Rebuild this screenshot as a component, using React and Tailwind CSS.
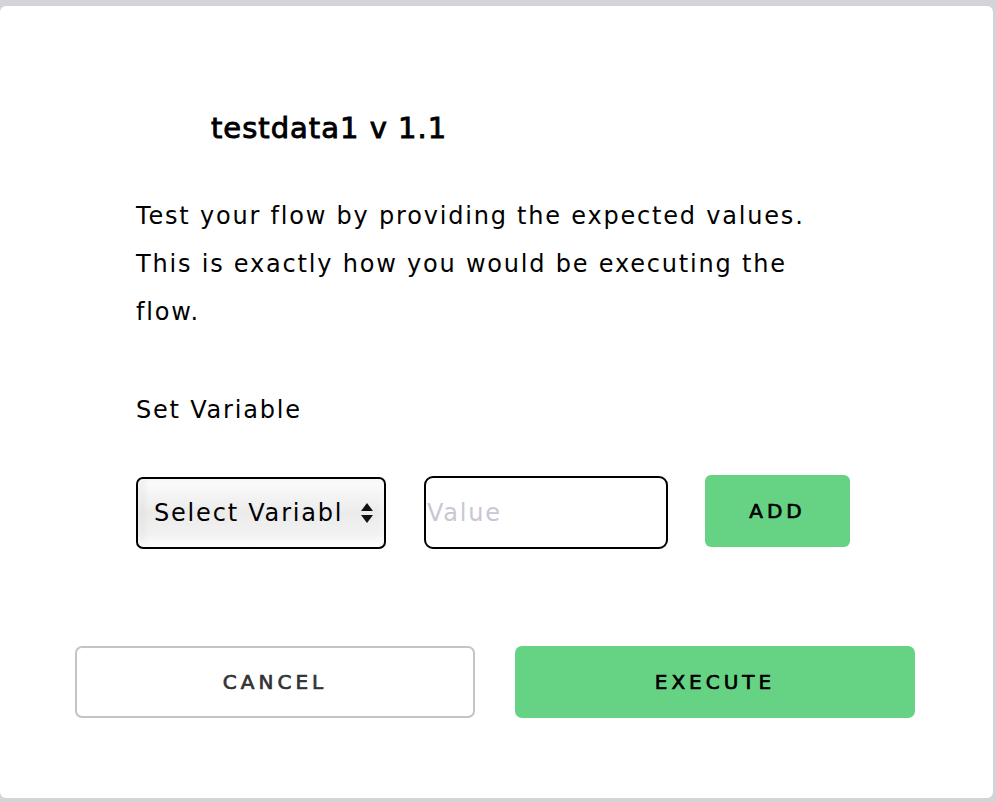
import React from 'react';

const font = { fontFamily: '"DejaVu Sans", "Open Sans", sans-serif' };

const App = () => {
  return (
    <div className="w-[996px] h-[802px] bg-[#d2d4d7] pt-[6px] overflow-hidden" style={font}>
      <div className="w-[993px] h-[792px] bg-white rounded-[6px] flex flex-col">
        <h1 className="ml-[211px] mt-[104px] text-[29px] leading-[36px] font-normal tracking-[1px] [-webkit-text-stroke:0.9px_black] text-black">
          testdata1 v 1.1
        </h1>

        {/* description */}
        <p className="ml-[136px] mt-[46px] text-[24px] leading-[48px] tracking-[1.8px] text-black">
          Test your flow by providing the expected values.<br />
          This is exactly how you would be executing the<br />
          flow.
        </p>

        <div className="ml-[136px] mt-[50px] text-[24px] leading-[48px] tracking-[1.8px] text-black">
          Set Variable
        </div>

        <div className="ml-[136px] mt-[41px] flex items-start">
          <div className="mt-[2px] w-[250px] h-[72px] border-2 border-black rounded-[7px] bg-gradient-to-b from-[#fdfdfd] via-[#ebebeb] to-[#f6f6f6] shadow-[inset_0_-6px_8px_rgba(255,255,255,0.8),inset_6px_0_6px_rgba(0,0,0,0.06)] flex items-center pl-[16px] pr-[10px]">
            <span className="text-[24px] tracking-[1.8px] text-black whitespace-nowrap overflow-hidden w-[188px]">Select Variable</span>
            <svg width="14" height="22" viewBox="0 0 14 22" className="ml-auto">
              <path d="M7 1 L13 9 L1 9 Z" fill="#111" />
              <path d="M1 13 L13 13 L7 21 Z" fill="#111" />
            </svg>
          </div>
          <div className="ml-[38px] mt-[1px] w-[244px] h-[73px] border-2 border-black rounded-[9px] flex items-center pl-[1px]">
            <span className="text-[24px] tracking-[1.8px] text-[#c9c7d5]">Value</span>
          </div>
          <button className="ml-[37px] w-[145px] h-[72px] bg-[#66d384] rounded-[6px] text-[20px] font-normal tracking-[4px] [-webkit-text-stroke:0.7px_black] text-black">
            ADD
          </button>
        </div>

        <div className="ml-[75px] mt-[97px] flex items-start">
          <button className="w-[400px] h-[72px] border-2 border-[#c4c4c4] rounded-[7px] text-[20px] font-normal tracking-[4px] [-webkit-text-stroke:0.7px_#333] text-[#333]">
            CANCEL
          </button>
          <button className="ml-[40px] w-[400px] h-[72px] bg-[#66d384] rounded-[7px] text-[20px] font-normal tracking-[4px] [-webkit-text-stroke:0.7px_black] text-black">
            EXECUTE
          </button>
        </div>
      </div>
    </div>
  );
};

export default App;
